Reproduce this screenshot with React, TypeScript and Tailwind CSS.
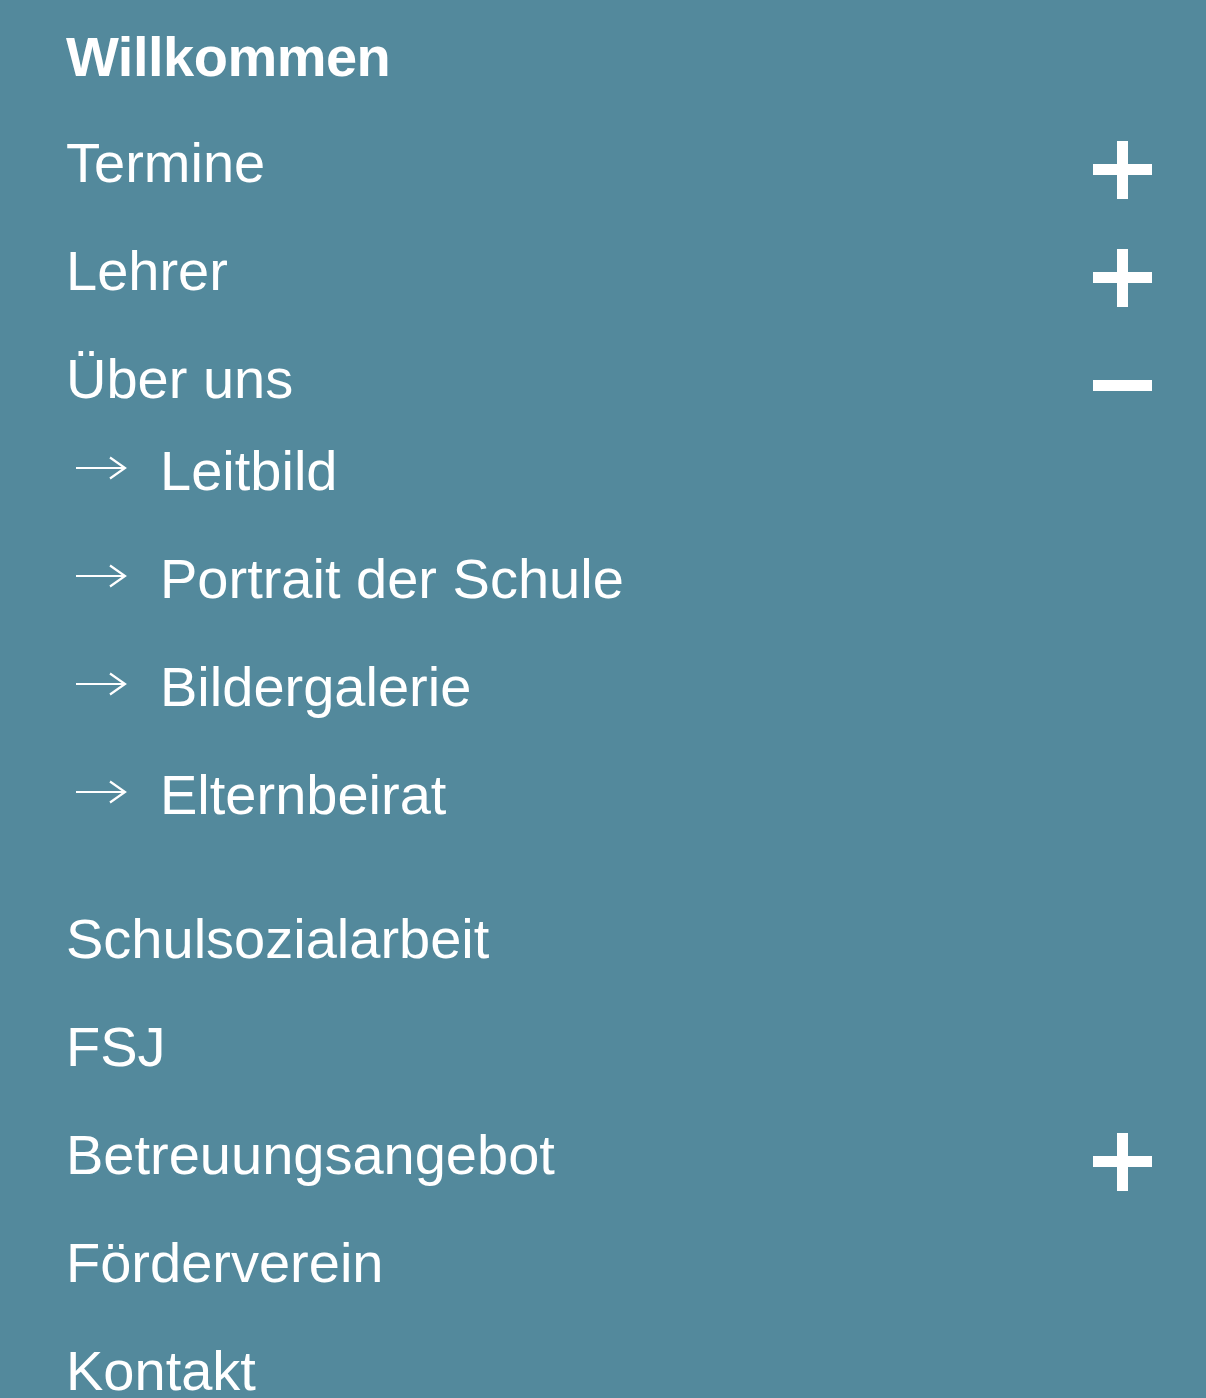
import React from "react";

// ── Mobile-Navigation ─────────────────────────────────────────────────────────
type Item = { label: string; toggle?: "plus" | "minus"; children?: string[] };

const items: Item[] = [
  { label: "Termine", toggle: "plus" },
  { label: "Lehrer", toggle: "plus" },
  {
    label: "Über uns",
    toggle: "minus",
    children: ["Leitbild", "Portrait der Schule", "Bildergalerie", "Elternbeirat"],
  },
  { label: "Schulsozialarbeit" },
  { label: "FSJ" },
  { label: "Betreuungsangebot", toggle: "plus" },
  { label: "Förderverein" },
  { label: "Kontakt" },
];

function Toggle({ kind }: { kind: "plus" | "minus" }) {
  return (
    <span className="relative mt-[32px] block h-[58px] w-[59px] shrink-0">
      <span className="absolute left-0 right-0 top-[23px] h-[11px] bg-white" />
      {kind === "plus" && <span className="absolute bottom-0 left-[24px] top-0 w-[11px] bg-white" />}
    </span>
  );
}

function Arrow() {
  return (
    <svg width="52" height="24" viewBox="0 0 52 24" fill="none" stroke="white" strokeWidth="2.2" className="mt-[39px] ml-[9px] shrink-0">
      <line x1="1" y1="12" x2="50" y2="12" />
      <polyline points="35,1.5 50,12 35,22.5" />
    </svg>
  );
}

export default function App() {
  return (
    <div
      className="h-[1398px] w-full overflow-hidden bg-[#53899c] pt-[4px] pl-[66px] pr-[54px] text-white"
      style={{ fontFamily: '"Liberation Sans", Arial, sans-serif' }}
    >
      <nav>
        <a className="block h-[105px] text-[56px] font-bold leading-[105px] tracking-[-0.5px]">Willkommen</a>
        <ul>
          {items.map(it => (
            <li key={it.label}>
              <div className="flex h-[108px] items-start justify-between">
                <span className="text-[56px] leading-[108px]">{it.label}</span>
                {it.toggle && <Toggle kind={it.toggle} />}
              </div>
              {it.children && (
                <ul className="-mt-[16px] mb-[36px]">
                  {it.children.map(c => (
                    <li key={c} className="flex h-[108px] items-start">
                      <Arrow />
                      <span className="ml-[33px] text-[56px] leading-[108px]">{c}</span>
                    </li>
                  ))}
                </ul>
              )}
            </li>
          ))}
        </ul>
      </nav>
    </div>
  );
}
